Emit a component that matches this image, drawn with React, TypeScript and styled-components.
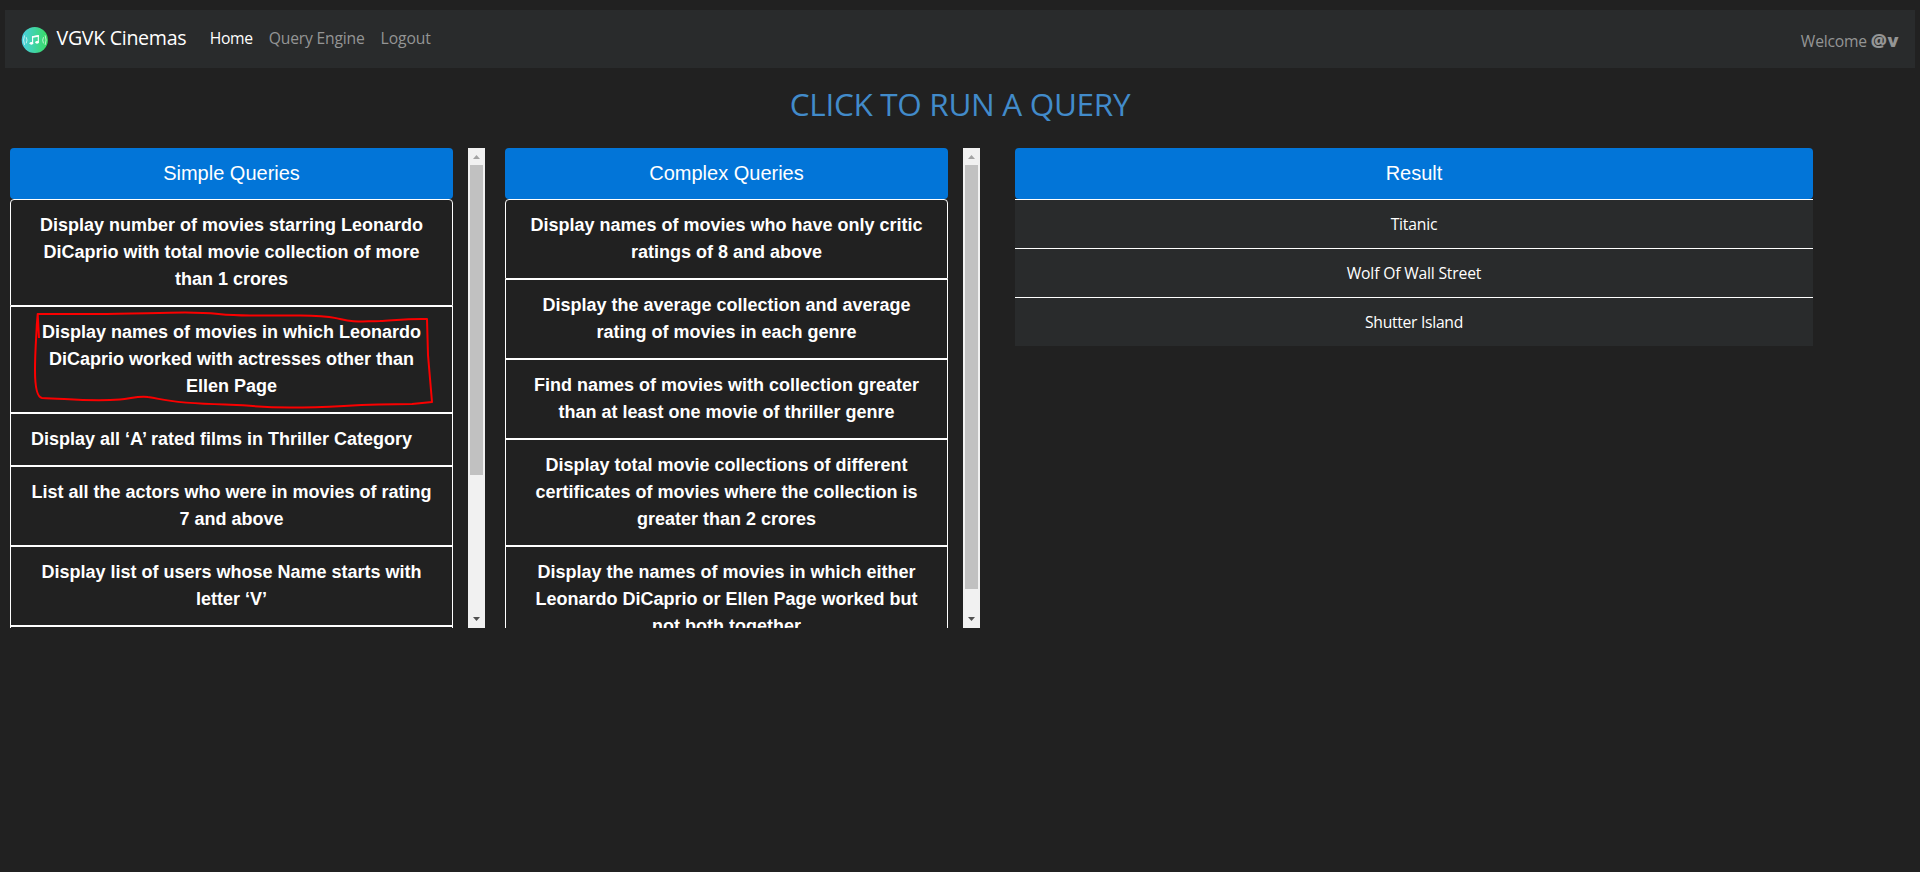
import React from "react";
import styled, { createGlobalStyle } from "styled-components";

const GlobalStyle = createGlobalStyle`
  *, *::before, *::after { box-sizing: border-box; }
  html, body { margin: 0; background: #212121; }
  body {
    font-family: "Open Sans", "Noto Sans", sans-serif;
    font-size: 15.7px;
    line-height: 24px;
    letter-spacing: -0.2px;
    color: #fff;
    overflow: hidden;
  }
`;

const Page = styled.div`
  min-height: 872px;
  padding: 10px 5px 0;
`;

const Navbar = styled.nav`
  display: flex;
  height: 58px;
  padding: 0 16px;
  background: #292b2c;
`;

const Brand = styled.a`
  display: flex;
  margin-right: 23.5px;
  font-size: 19.6px;
  letter-spacing: -0.3px;
  line-height: 30px;
  padding-top: 13px;
  white-space: nowrap;
`;

const Logo = styled.svg`
  display: block;
  width: 28px;
  height: 28px;
  margin: 3px 7.5px 0 0;
`;

const NavLinks = styled.div`
  display: flex;
  gap: 16px;
  padding-top: 16px;
`;

const NavLink = styled.a<{ $active?: boolean; $track?: number }>`
  color: ${(p) => (p.$active ? "#fff" : "#949595")};
  letter-spacing: ${(p) => p.$track ?? -0.2}px;
`;

const Welcome = styled.div`
  margin-left: auto;
  padding-top: 18px;
  color: #949595;

  b {
    font-size: 18px;
    font-weight: 800;
    letter-spacing: 0.5px;
  }
`;

const Title = styled.h1`
  margin: 16px 0 25px;
  text-align: center;
  font-size: 31.5px;
  font-weight: 400;
  line-height: 39px;
  letter-spacing: -0.32px;
  color: #428bca;
`;

const Columns = styled.main`
  display: flex;
  align-items: flex-start;
  padding-left: 5px;
`;

const ScrollArea = styled.section`
  display: flex;
  justify-content: space-between;
  width: 475px;
  height: 480px;
  margin-right: 20px;
  overflow: hidden;
`;

const QueryColumn = styled.div`
  width: 443px;
`;

const PanelHeader = styled.div`
  height: 51px;
  border-radius: 4px;
  padding: 13px 0;
  background: #0275d8;
  font: 20px/25px "Liberation Sans", Arial, sans-serif;
  letter-spacing: 0;
  text-align: center;
`;

const QueryItem = styled.div`
  position: relative;
  display: flex;
  padding: 12px 20px;
  border: 1px solid #fff;
  font: bold 18px/27px "Liberation Sans", Arial, sans-serif;
  letter-spacing: 0;
  text-align: center;

  &:first-child {
    border-radius: 4px 4px 0 0;
  }
`;

const Scribble = styled.svg`
  position: absolute;
  top: 0;
  left: 0;
  width: 441px;
  height: 105px;
`;

const Scrollbar = styled.div`
  display: flex;
  flex-direction: column;
  width: 17px;
  height: 480px;
  background: #f1f1f1;
`;

const Thumb = styled.div<{ $length: number }>`
  height: ${(p) => p.$length}px;
  margin: 0 2px;
  background: #c1c1c1;
`;

const ArrowIcon = styled.svg<{ $bottom?: boolean }>`
  display: block;
  width: 17px;
  height: 17px;
  margin-top: ${(p) => (p.$bottom ? "auto" : 0)};
`;

const ResultPanel = styled.section`
  width: 798px;
  margin-left: 15px;
`;

const ResultRow = styled.div<{ $track?: number }>`
  height: 49px;
  padding: 12px;
  border-top: 1px solid #fff;
  background: #292b2c;
  text-align: center;
  letter-spacing: ${(p) => p.$track ?? -0.18}px;
`;

const simpleQueries = [
  "Display number of movies starring Leonardo DiCaprio with total movie collection of more than 1 crores",
  "Display names of movies in which Leonardo DiCaprio worked with actresses other than Ellen Page",
  "Display all ‘A’ rated films in Thriller Category",
  "List all the actors who were in movies of rating 7 and above",
  "Display list of users whose Name starts with letter ‘V’",
  "",
];

const complexQueries = [
  "Display names of movies who have only critic ratings of 8 and above",
  "Display the average collection and average rating of movies in each genre",
  "Find names of movies with collection greater than at least one movie of thriller genre",
  "Display total movie collections of different certificates of movies where the collection is greater than 2 crores",
  "Display the names of movies in which either Leonardo DiCaprio or Ellen Page worked but not both together",
];

function QueryPanel({
  title,
  queries,
  thumb,
  marked,
}: {
  title: string;
  queries: string[];
  thumb: number;
  marked?: number;
}) {
  return (
    <ScrollArea>
      <QueryColumn>
        <PanelHeader>{title}</PanelHeader>
        <div>
          {queries.map((query, i) => (
            <QueryItem key={i}>
              <span>{query}</span>
              {i === marked && (
                <Scribble viewBox="11 307 441 105" fill="none" stroke="#fa0000" strokeWidth="2" strokeLinejoin="round">
                  <path d="M39 338L37.7 314H97C130 314 160 312.5 185 312.5C222 312.5 215 315.5 250 315.5H300C328 315.5 330 317 340 319C354 322.5 356 321.5 380 321C397 320 410 318.5 427 319L428 355L432 402L412 404C350 404 340 407.5 290 407.5C255 407.5 250 405 225 404.5C165 403 164 399 148 397C138 395.5 130 399 120 399.5C90 402 65 398.5 42 398C36 397 35 383 35 370C35 350 36.5 335 36.8 325L37.7 314" />
                </Scribble>
              )}
            </QueryItem>
          ))}
        </div>
      </QueryColumn>
      <Scrollbar>
        <ArrowIcon viewBox="0 0 17 17">
          <path d="M5 11L8.5 7L12 11Z" fill="#a3a3a3" />
        </ArrowIcon>
        <Thumb $length={thumb} />
        <ArrowIcon viewBox="0 0 17 17" $bottom>
          <path d="M5 6L8.5 10L12 6Z" fill="#505050" />
        </ArrowIcon>
      </Scrollbar>
    </ScrollArea>
  );
}

export default function App() {
  return (
    <>
      <GlobalStyle />
      <Page>
        <Navbar>
          <Brand>
            <Logo viewBox="0 0 28 28" fill="none">
              <defs>
                <linearGradient id="disc" x1="0" y1="0" x2="1" y2="0">
                  <stop offset="0" stopColor="#49cfe3" />
                  <stop offset="1" stopColor="#37db60" />
                </linearGradient>
              </defs>
              <circle cx="13.8" cy="14" r="13.1" fill="url(#disc)" />
              <g stroke="#fff" strokeLinecap="round">
                <path d="M11.6 17V10.6L17.3 9.6V16" strokeWidth="1.1" />
                <path d="M11.6 11L17.3 10" strokeWidth="1.5" />
                <path d="M5.4 11.5Q6.8 14 5.4 17M3.4 9.8Q1.6 14 3.4 18.5M22.3 11.5Q20.9 14 22.3 17M24.3 9.8Q26 14 24.3 18.5" strokeWidth="0.9" opacity="0.75" />
              </g>
              <ellipse cx="10.4" cy="17.3" rx="1.8" ry="1.4" fill="#fff" />
              <ellipse cx="16.1" cy="16.3" rx="1.8" ry="1.4" fill="#fff" />
            </Logo>
            VGVK Cinemas
          </Brand>
          <NavLinks>
            <NavLink $active $track={-0.35}>Home</NavLink>
            <NavLink>Query Engine</NavLink>
            <NavLink $track={-0.1}>Logout</NavLink>
          </NavLinks>
          <Welcome>
            Welcome <b>@v</b>
          </Welcome>
        </Navbar>
        <Title>CLICK TO RUN A QUERY</Title>
        <Columns>
          <QueryPanel title="Simple Queries" queries={simpleQueries} thumb={310} marked={1} />
          <QueryPanel title="Complex Queries" queries={complexQueries} thumb={424} />
          <ResultPanel>
            <PanelHeader>Result</PanelHeader>
            <ResultRow>Titanic</ResultRow>
            <ResultRow>Wolf Of Wall Street</ResultRow>
            <ResultRow $track={-0.3}>Shutter Island</ResultRow>
          </ResultPanel>
        </Columns>
      </Page>
    </>
  );
}
